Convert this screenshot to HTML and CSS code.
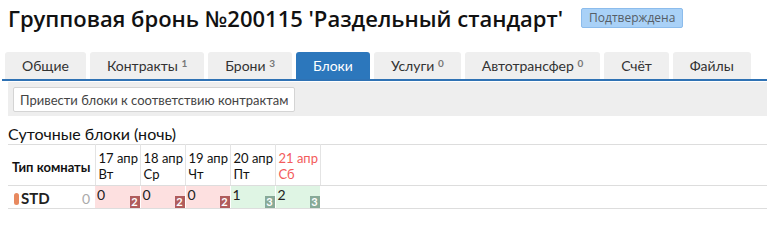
FILE: index.html
```html
<!DOCTYPE html>
<html lang="ru">
<head>
  <meta charset="UTF-8" />
  <title>Групповая бронь №200115</title>
  <link rel="stylesheet" href="styles.css">
</head>
<body>
  <!-- Заголовок -->
  <h1 class="title">Групповая бронь №200115 'Раздельный стандарт' <span class="status">Подтверждена</span></h1>

  <!-- Вкладки -->
  <ul class="tabs">
    <li>Общие</li>
    <li>Контракты <sup>1</sup></li>
    <li>Брони <sup>3</sup></li>
    <li class="active">Блоки</li>
    <li>Услуги <sup>0</sup></li>
    <li>Автотрансфер <sup>0</sup></li>
    <li>Счёт</li>
    <li>Файлы</li>
  </ul>

  <div class="toolbar">
    <button class="btn">Привести блоки к соответствию контрактам</button>
  </div>

  <h2 class="section-title">Суточные блоки (ночь)</h2>

  <table class="blocks">
    <thead>
      <tr>
        <th class="room-head">Тип комнаты</th>
        <th class="day">17 апр<br>Вт</th>
        <th class="day">18 апр<br>Ср</th>
        <th class="day">19 апр<br>Чт</th>
        <th class="day">20 апр<br>Пт</th>
        <th class="day weekend">21 апр<br>Сб</th>
        <th class="filler"></th>
      </tr>
    </thead>
    <tbody>
      <tr>
        <td class="room"><span class="marker"></span><b>STD</b><span class="room-count">0</span></td>
        <td class="cell short">0<span class="quota">2</span></td>
        <td class="cell short">0<span class="quota">2</span></td>
        <td class="cell short">0<span class="quota">2</span></td>
        <td class="cell ok">1<span class="quota">3</span></td>
        <td class="cell ok">2<span class="quota">3</span></td>
        <td class="filler"></td>
      </tr>
    </tbody>
  </table>
</body>
</html>
```

FILE: styles.css
```css
/* Base */
* {
  box-sizing: border-box;
}
body {
  margin: 0;
  padding: 0 0 0 8px;
  font-family: Lato, "Noto Sans", sans-serif;
  color: #222;
  background: #fff;
}

/* Title */
.title {
  margin: 3px 0 0;
  font-family: "Open Sans", sans-serif;
  font-size: 22px;
  line-height: 30px;
  font-weight: 600;
  color: #111;
  display: flex;
  align-items: center;
  gap: 18px;
  white-space: nowrap;
}
.status {
  font-family: "Open Sans", sans-serif;
  font-size: 12px;
  font-weight: 400;
  line-height: 18px;
  padding: 0 7px;
  background: #a9d1f7;
  border: 1px solid #8cbcec;
  border-radius: 2px;
  color: #555d66;
}

/* Tabs */
.tabs {
  list-style: none;
  margin: 19px 0 0 -6px;
  padding: 0 0 0 3px;
  display: flex;
  gap: 4px;
  border-bottom: 2px solid #2f72b4;
}
.tabs li {
  height: 27px;
  padding: 0 17px;
  background: #efefef;
  border-radius: 3px 3px 0 0;
  font-size: 14px;
  line-height: 28px;
  color: #333;
  white-space: nowrap;
}
.tabs li.active {
  background: #2c77bc;
  color: #fff;
}
.tabs sup {
  font-size: 10px;
  font-weight: 700;
  color: #777;
  vertical-align: 4px;
  line-height: 0;
}

/* Toolbar */
.toolbar {
  margin-top: 1px;
  background: #eee;
  padding: 5px;
  height: 34px;
}
.btn {
  font-family: Lato, sans-serif;
  font-size: 13px;
  color: #444;
  background: #fff;
  border: 1px solid #d4d4d4;
  border-radius: 2px;
  height: 25px;
  padding: 0 6px;
  white-space: nowrap;
}

/* Section */
.section-title {
  margin: 7px 0 0;
  font-size: 16px;
  font-weight: 400;
  line-height: 21px;
  color: #111;
}

/* Blocks table */
.blocks {
  margin-top: 0;
  width: calc(100% + 8px);
  border-collapse: collapse;
  table-layout: fixed;
  font-size: 14px;
}
.blocks th {
  height: 41px;
  border-top: 1px solid #ddd;
  border-bottom: 1px solid #ddd;
  border-right: 1px solid #e4e4e4;
  font-weight: 400;
  text-align: left;
  padding: 0 0 0 3px;
  line-height: 16px;
  color: #111;
  white-space: nowrap;
  overflow: hidden;
}
.blocks th.room-head {
  width: 87px;
  font-weight: 700;
  font-size: 13px;
  padding: 4px 0 0 4px;
}
.blocks th.day {
  width: 45px;
  font-size: 13px;
  padding-top: 2px;
}
.blocks th.weekend {
  color: #f35b5b;
}
.blocks th.filler {
  border-right: none;
}
.blocks td {
  height: 23px;
  border-bottom: 1px solid #ddd;
  padding: 0;
  vertical-align: top;
}
.room {
  position: relative;
  padding: 3px 0 0 6px !important;
  font-size: 15px;
}
.marker {
  display: inline-block;
  width: 5px;
  height: 12px;
  margin-right: 2px;
  border-radius: 3px;
  background: #e8895f;
  vertical-align: -1px;
}
.room-count {
  position: absolute;
  right: 5px;
  top: 4px;
  font-size: 14px;
  color: #aaa;
}
.cell {
  position: relative;
  padding: 1px 0 0 2px !important;
  border-right: 1px solid #fff;
  line-height: 16px;
}
.cell.short {
  background: #fde0e0;
}
.cell.ok {
  background: #dff5e4;
}
.quota {
  position: absolute;
  right: 0;
  bottom: 0;
  width: 10px;
  height: 12px;
  font-size: 11px;
  font-weight: 700;
  line-height: 12px;
  text-align: center;
  color: #fff;
}
.short .quota {
  background: #b05c5c;
}
.ok .quota {
  background: #88aa98;
}
```
